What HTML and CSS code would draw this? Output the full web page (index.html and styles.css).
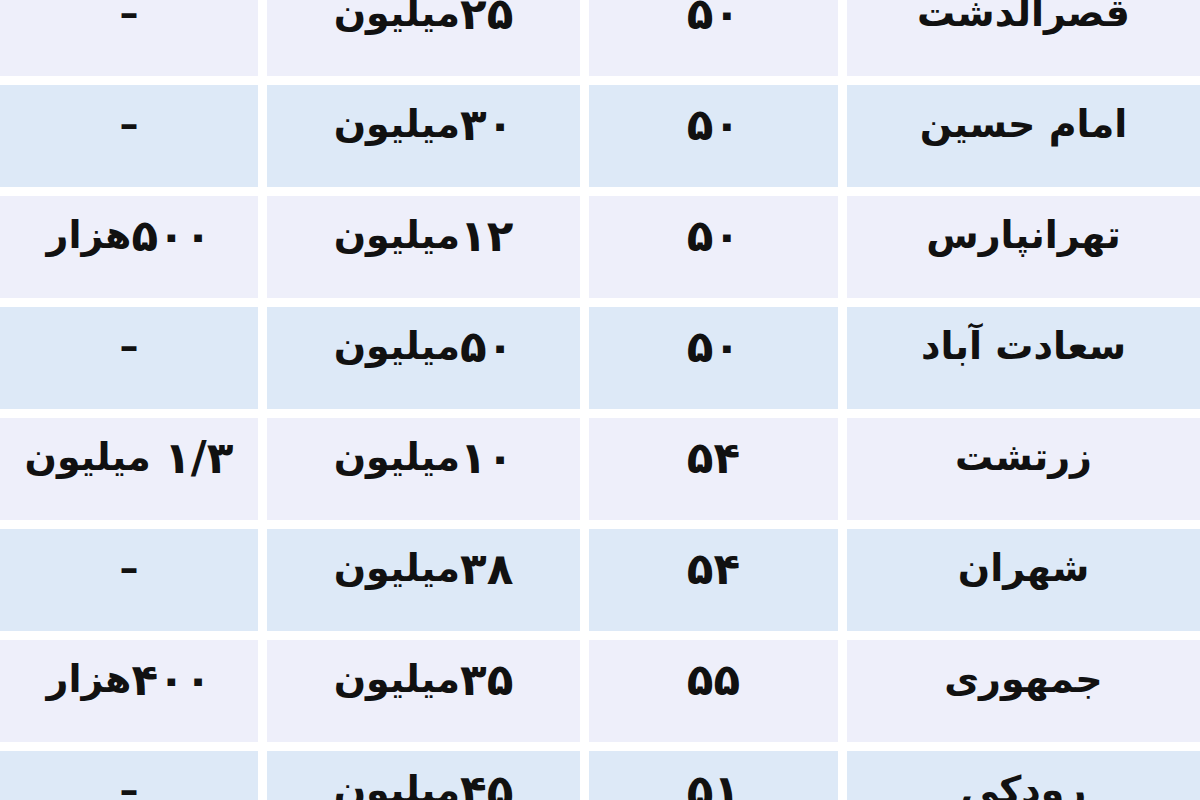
FILE: index.html
```html
<!DOCTYPE html>
<html lang="fa" dir="rtl">
<head>
<meta charset="utf-8">
<title>جدول قیمت</title>
<link rel="stylesheet" href="styles.css">
</head>
<body>
<div class="table">
  <div class="cell light">قصرالدشت</div><div class="cell light"><span class="num">۵۰</span></div><div class="cell light"><span class="num">۲۵</span>میلیون</div><div class="cell light">–</div>
  <div class="cell blue">امام حسین</div><div class="cell blue"><span class="num">۵۰</span></div><div class="cell blue"><span class="num">۳۰</span>میلیون</div><div class="cell blue">–</div>
  <div class="cell light">تهرانپارس</div><div class="cell light"><span class="num">۵۰</span></div><div class="cell light"><span class="num">۱۲</span>میلیون</div><div class="cell light"><span class="num">۵۰۰</span>هزار</div>
  <div class="cell blue">سعادت آباد</div><div class="cell blue"><span class="num">۵۰</span></div><div class="cell blue"><span class="num">۵۰</span>میلیون</div><div class="cell blue">–</div>
  <div class="cell light">زرتشت</div><div class="cell light"><span class="num">۵۴</span></div><div class="cell light"><span class="num">۱۰</span>میلیون</div><div class="cell light"><span class="num">۱/۳</span>&nbsp;میلیون</div>
  <div class="cell blue">شهران</div><div class="cell blue"><span class="num">۵۴</span></div><div class="cell blue"><span class="num">۳۸</span>میلیون</div><div class="cell blue">–</div>
  <div class="cell light">جمهوری</div><div class="cell light"><span class="num">۵۵</span></div><div class="cell light"><span class="num">۳۵</span>میلیون</div><div class="cell light"><span class="num">۴۰۰</span>هزار</div>
  <div class="cell blue">رودکی</div><div class="cell blue"><span class="num">۵۱</span></div><div class="cell blue"><span class="num">۴۵</span>میلیون</div><div class="cell blue">–</div>
</div>
</body>
</html>
```

FILE: styles.css
```css
html, body {
  margin: 0;
  padding: 0;
  background: #ffffff;
  overflow: hidden;
  height: 800px;
}
body {
  font-family: "DejaVu Sans", "Noto Sans", sans-serif;
}
.table {
  display: grid;
  grid-template-columns: 353px 249px 313px 258px;
  grid-auto-rows: 102px;
  gap: 9px;
  margin-top: -26px;
  width: 1200px;
}
.cell {
  display: flex;
  align-items: center;
  justify-content: center;
  font-size: 38px;
  font-weight: bold;
  color: #111111;
  padding-bottom: 24px;
  box-sizing: border-box;
  white-space: nowrap;
}
.num {
  font-size: 1.15em;
  letter-spacing: 1px;
}
.light {
  background: #eeeffa;
}
.blue {
  background: #dde9f7;
}
```
